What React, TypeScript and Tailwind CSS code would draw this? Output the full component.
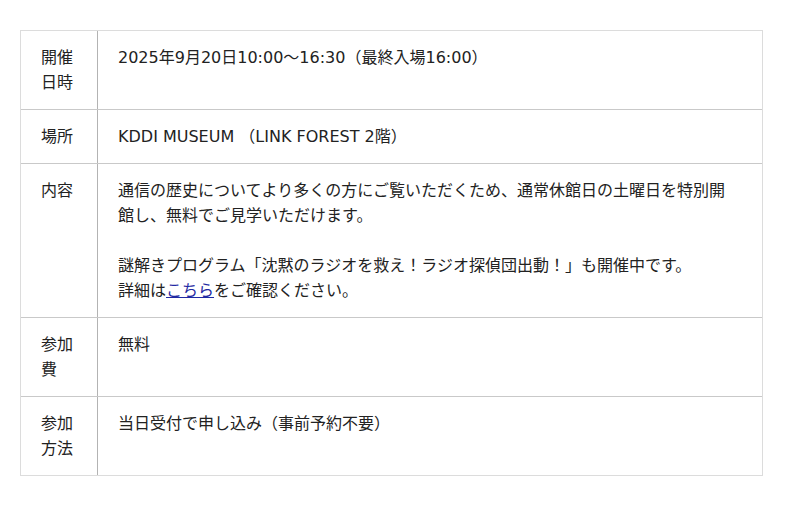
import React from 'react';

interface RowProps {
  label: React.ReactNode;
  children: React.ReactNode;
  last?: boolean;
}

function Row({ label, children, last = false }: RowProps) {
  return (
    <div className={`flex ${last ? '' : 'border-b border-[#c9c9c9]'}`}>
      <div className="w-[77px] shrink-0 border-r border-[#b3b3b3] px-5 py-[14px]">{label}</div>
      <div className="flex-1 pl-5 pr-[22px] py-[14px]">{children}</div>
    </div>
  );
}

export default function App() {
  return (
    <div
      className="min-h-[506px] bg-white pt-[30px] pl-5 text-[16px] leading-[25px] text-[#222]"
      style={{ fontFamily: '"DejaVu Sans", "Noto Sans CJK JP", sans-serif' }}
    >
      <div className="w-[743px] border border-[#dcdcdc]">
        <Row label="開催日時">2025年9月20日10:00〜16:30（最終入場16:00）</Row>
        <Row label="場所">KDDI MUSEUM （LINK FOREST 2階）</Row>
        <Row label="内容">
          <p>通信の歴史についてより多くの方にご覧いただくため、通常休館日の土曜日を特別開館し、無料でご見学いただけます。</p>
          <p className="mt-[25px]">
            謎解きプログラム「沈黙のラジオを救え！ラジオ探偵団出動！」も開催中です。
            <br />
            詳細は
            <a href="#" className="text-[#1f2aa3] underline">
              こちら
            </a>
            をご確認ください。
          </p>
        </Row>
        <Row label="参加費">無料</Row>
        <Row label="参加方法" last>
          当日受付で申し込み（事前予約不要）
        </Row>
      </div>
    </div>
  );
}
